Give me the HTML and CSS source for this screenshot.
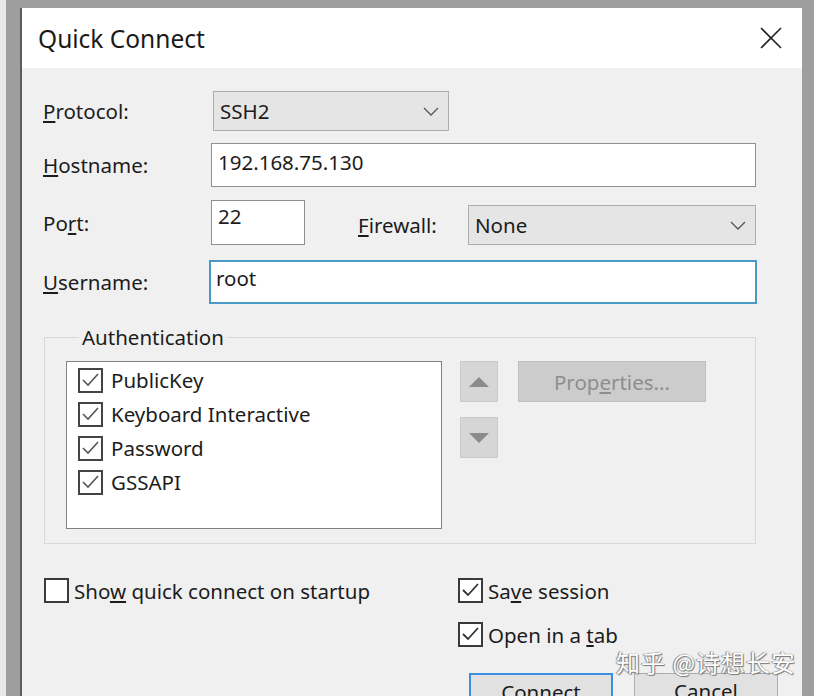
FILE: index.html
```html
<!DOCTYPE html>
<html>
  <head>
    <meta http-equiv="Content-Type" content="text/html;charset=UTF-8">
    <title>Quick Connect</title>
    <link rel="stylesheet" href="styles.css">
  </head>
  <body>
    <div class="dialog">
      <div class="titlebar">
        <span class="title">Quick Connect</span>
        <svg class="close" width="22" height="22" viewBox="0 0 22 22">
          <line x1="1" y1="1" x2="21" y2="21" stroke="#222" stroke-width="1.6"/>
          <line x1="21" y1="1" x2="1" y2="21" stroke="#222" stroke-width="1.6"/>
        </svg>
      </div>
      <div class="content">
        <div class="row row-protocol">
          <label class="lbl"><u>P</u>rotocol:</label>
          <div class="combo combo-protocol">
            <span>SSH2</span>
            <svg width="16" height="9" viewBox="0 0 16 9"><polyline points="1,1 8,8 15,1" fill="none" stroke="#555" stroke-width="1.3"/></svg>
          </div>
        </div>
        <div class="row row-host">
          <label class="lbl"><u>H</u>ostname:</label>
          <div class="edit edit-host">192.168.75.130</div>
        </div>
        <div class="row row-port">
          <label class="lbl">Po<u>r</u>t:</label>
          <div class="edit edit-port">22</div>
          <label class="lbl lbl-fw"><u>F</u>irewall:</label>
          <div class="combo combo-fw">
            <span>None</span>
            <svg width="16" height="9" viewBox="0 0 16 9"><polyline points="1,1 8,8 15,1" fill="none" stroke="#555" stroke-width="1.3"/></svg>
          </div>
        </div>
        <div class="row row-user">
          <label class="lbl"><u>U</u>sername:</label>
          <div class="edit edit-user">root</div>
        </div>

        <fieldset class="group">
          <legend>Authentication</legend>
          <div class="group-body">
            <div class="listbox">
              <div class="item"><span class="box"><svg width="21" height="21" viewBox="0 0 21 21"><polyline points="3,10 8,15 18,4" fill="none" stroke="#555" stroke-width="1.6"/></svg></span><span>PublicKey</span></div>
              <div class="item"><span class="box"><svg width="21" height="21" viewBox="0 0 21 21"><polyline points="3,10 8,15 18,4" fill="none" stroke="#555" stroke-width="1.6"/></svg></span><span>Keyboard Interactive</span></div>
              <div class="item"><span class="box"><svg width="21" height="21" viewBox="0 0 21 21"><polyline points="3,10 8,15 18,4" fill="none" stroke="#555" stroke-width="1.6"/></svg></span><span>Password</span></div>
              <div class="item"><span class="box"><svg width="21" height="21" viewBox="0 0 21 21"><polyline points="3,10 8,15 18,4" fill="none" stroke="#555" stroke-width="1.6"/></svg></span><span>GSSAPI</span></div>
            </div>
            <div class="arrows">
              <div class="arrow"><svg width="20" height="10" viewBox="0 0 20 10"><polygon points="10,0 20,10 0,10" fill="#8c8c8c"/></svg></div>
              <div class="arrow"><svg width="20" height="10" viewBox="0 0 20 10"><polygon points="0,0 20,0 10,10" fill="#8c8c8c"/></svg></div>
            </div>
            <div class="btn btn-props"><span>Prop<u>e</u>rties...</span></div>
          </div>
        </fieldset>

        <div class="bottom">
          <div class="col-left">
            <div class="check"><span class="box"></span><span>Sho<u>w</u> quick connect on startup</span></div>
          </div>
          <div class="col-right">
            <div class="check"><span class="box"><svg width="21" height="21" viewBox="0 0 21 21"><polyline points="3,10 8,15 18,4" fill="none" stroke="#333" stroke-width="1.8"/></svg></span><span>Sa<u>v</u>e session</span></div>
            <div class="check check-tab"><span class="box"><svg width="21" height="21" viewBox="0 0 21 21"><polyline points="3,10 8,15 18,4" fill="none" stroke="#333" stroke-width="1.8"/></svg></span><span>Open in a <u>t</u>ab</span></div>
            <div class="buttons">
              <div class="btn btn-default">Connect</div>
              <div class="btn">Cancel</div>
            </div>
          </div>
        </div>
      </div>
      <div class="watermark">知乎 @诗想长安</div>
    </div>
  </body>
</html>
```

FILE: styles.css
```css
html, body {
  height: 100%;
}
body {
  margin: 0;
  padding: 8px 12px 0 20px;
  box-sizing: border-box;
  overflow: hidden;
  background: linear-gradient(to right, #e9e9e9 6px, #9e9e9e 6px);
  font-family: "Noto Sans", "Open Sans", sans-serif;
  color: #1c1c1c;
}
.dialog {
  position: relative;
  height: 720px;
  background: #f0f0f0;
  border-left: 2px solid #5c5c5c;
}
.titlebar {
  height: 60px;
  background: #ffffff;
  display: flex;
  align-items: center;
  justify-content: space-between;
  padding: 0 20px 0 16px;
}
.title {
  font-size: 24.5px;
  color: #1a1a1a;
}
.content {
  padding: 23px 46px 0 21px;
  font-size: 20.5px;
}
.row {
  display: flex;
  align-items: center;
}
.lbl {
  width: 168px;
  flex: none;
}
.row-host {
  margin-top: 12px;
}
.row-port {
  margin-top: 13px;
  align-items: flex-end;
}
.row-port .lbl {
  align-self: center;
}
.row-port .lbl-fw {
  width: 110px;
  margin-left: 53px;
  position: relative;
  top: 2px;
}
.row-user {
  margin-top: 15px;
}
.combo {
  height: 40px;
  box-sizing: border-box;
  background: #e5e5e5;
  border: 1px solid #adadad;
  display: flex;
  align-items: center;
  justify-content: space-between;
  padding: 0 9px 0 6px;
}
.combo-protocol {
  width: 236px;
  margin-left: 2px;
}
.combo-fw {
  flex: 1;
}
.edit {
  height: 44px;
  box-sizing: border-box;
  background: #ffffff;
  border: 1px solid #8f8f8f;
  padding: 4px 6px 0 6px;
  line-height: 28px;
}
.edit-host {
  flex: 1;
}
.edit-port {
  width: 94px;
  height: 45px;
  padding-top: 1px;
}
.edit-user {
  flex: 1;
  margin-left: -2px;
  margin-right: -1px;
  border: 2px solid #4a9bc4;
  padding: 2px 5px 0 5px;
}
.group {
  margin: 19px 0 0 1px;
  padding: 10px 0 14px 21px;
  border: 1px solid #d9d9d9;
  min-width: 0;
}
.group legend {
  padding: 0 3px;
  margin-left: 13px;
  color: #1c1c1c;
}
.group-body {
  display: flex;
  align-items: flex-start;
}
.listbox {
  width: 376px;
  height: 168px;
  box-sizing: border-box;
  background: #ffffff;
  border: 1px solid #828282;
  padding: 1px 0 0 11px;
}
.item {
  display: flex;
  align-items: center;
  height: 34px;
}
.box {
  width: 25px;
  height: 25px;
  box-sizing: border-box;
  border: 2px solid #3a3a3a;
  background: #ffffff;
  display: flex;
  align-items: center;
  justify-content: center;
  flex: none;
  margin-right: 8px;
}
.listbox .box {
  border-color: #444;
}
.arrows {
  margin-left: 18px;
  display: flex;
  flex-direction: column;
  gap: 15px;
}
.arrow {
  width: 38px;
  height: 41px;
  box-sizing: border-box;
  background: #d6d6d6;
  border: 1px solid #cacaca;
  display: flex;
  align-items: center;
  justify-content: center;
}
.btn {
  height: 41px;
  box-sizing: border-box;
  background: #e1e1e1;
  border: 1px solid #adadad;
  display: flex;
  align-items: center;
  justify-content: center;
}
.btn-props {
  width: 188px;
  margin-left: 20px;
  background: #cccccc;
  border-color: #bfbfbf;
  color: #8e8e8e;
}
.bottom {
  display: flex;
  margin: 34px 0 0 1px;
}
.col-left {
  width: 414px;
  flex: none;
}
.check {
  display: flex;
  align-items: center;
  height: 25px;
}
.check .box {
  margin-right: 5px;
}
.check-tab {
  margin-top: 19px;
}
.buttons {
  display: flex;
  gap: 21px;
  margin: 26px 0 0 11px;
}
.buttons .btn {
  width: 144px;
  height: 44px;
  align-items: flex-start;
  padding-top: 3px;
}
.btn-default {
  border: 2px solid #3b8ee0;
}
.watermark {
  position: absolute;
  left: 594px;
  top: 636px;
  font-family: "Noto Sans CJK SC", sans-serif;
  font-size: 24px;
  color: #ffffff;
  letter-spacing: 1px;
  text-shadow: 0 0 1px #6a6a6a, 1px 1px 1px #7a7a7a, -1px 0 1px #8a8a8a;
}
```
